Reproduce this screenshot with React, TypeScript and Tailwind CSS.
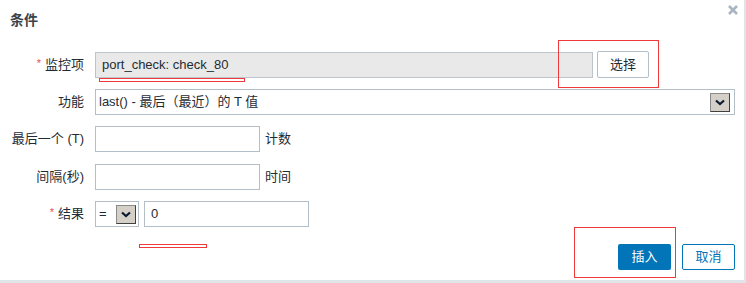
function Chevron() {
  return (
    <svg width="10" height="7" viewBox="0 0 10 7">
      <path d="M1 1.5 L5 5 L9 1.5" fill="none" stroke="#0b1a33" strokeWidth="2.2" />
    </svg>
  );
}

function ArrowBox() {
  return (
    <div className="w-[20px] h-[19px] bg-[#d4d0c8] border border-[#404040] border-t-[#8a8a8a] border-l-[#8a8a8a] flex items-center justify-center">
      <Chevron />
    </div>
  );
}

function Label({ text, required }: { text: string; required?: boolean }) {
  return (
    <div className="w-[84px] shrink-0 text-right text-[13px] text-[#1f2c33]">
      {required && <span className="text-[#e0525a] text-[11px] mr-[4px] align-top">*</span>}
      {text}
    </div>
  );
}

export default function App() {
  return (
    <div
      className="w-[746px] h-[283px] bg-[#dfe4e8] text-[#1f2c33]"
      style={{ fontFamily: '"Liberation Sans", "Noto Sans CJK SC", sans-serif' }}
    >
      <div className="relative w-[744px] h-[280px] bg-white">
        <div className="flex items-start justify-between">
          <h2 className="pl-[10px] pt-[11px] text-[14px] font-bold text-[#3a434a] leading-[18px]">条件</h2>
          <svg className="mt-[5px] mr-[6px]" width="10" height="10" viewBox="0 0 10 10">
            <path d="M1 1 L9 9 M9 1 L1 9" stroke="#a9b5c0" strokeWidth="2.6" />
          </svg>
        </div>

        <div className="mt-[22px] flex flex-col">
          <div className="flex items-center h-[27px] gap-[11px]">
            <Label text="监控项" required />
            <div className="w-[498px] h-[26px] bg-[#e9e9e9] border border-[#bcc5cb] flex items-center pl-[6px] text-[13px]">
              port_check: check_80
            </div>
            <button className="ml-[-7px] w-[52px] h-[27px] bg-white border border-[#b3bfc8] rounded-[2px] text-[13px] text-[#1f2c33]">
              选择
            </button>
          </div>

          <div className="mt-[11px] flex items-center h-[26px] gap-[11px]">
            <Label text="功能" />
            <div className="w-[640px] h-[26px] border border-[#b3bfc8] flex items-center justify-between pl-[3px] pr-[4px] text-[13px]">
              <span>last() - 最后（最近）的 T 值</span>
              <ArrowBox />
            </div>
          </div>

          <div className="mt-[11px] flex items-center h-[26px] gap-[11px]">
            <Label text="最后一个 (T)" />
            <div className="w-[165px] h-[26px] border border-[#b3bfc8]" />
            <span className="ml-[-6px] text-[13px]">计数</span>
          </div>

          <div className="mt-[12px] flex items-center h-[26px] gap-[11px]">
            <Label text="间隔(秒)" />
            <div className="w-[165px] h-[26px] border border-[#b3bfc8]" />
            <span className="ml-[-6px] text-[13px]">时间</span>
          </div>

          <div className="mt-[11px] flex items-center h-[26px] gap-[11px]">
            <Label text="结果" required />
            <div className="w-[44px] h-[26px] border border-[#b3bfc8] flex items-center justify-between pl-[3px] pr-[2px] text-[13px]">
              <span>=</span>
              <ArrowBox />
            </div>
            <div className="ml-[-6px] w-[165px] h-[26px] border border-[#b3bfc8] flex items-center pl-[6px] text-[13px]">
              0
            </div>
          </div>

          <div className="mt-[17px] mr-[9px] flex justify-end gap-[11px]">
            <button className="w-[53px] h-[26px] bg-[#0275b8] rounded-[2px] text-white text-[13px]">插入</button>
            <button className="w-[53px] h-[26px] bg-white border border-[#0275b8] rounded-[2px] text-[#0275b8] text-[13px]">
              取消
            </button>
          </div>
        </div>

        <div className="absolute left-[99px] top-[78px] w-[146px] h-[4px] border border-[#ee3a3a]" />
        <div className="absolute left-[558px] top-[40px] w-[101px] h-[48px] border border-[#ee3a3a]" />
        <div className="absolute left-[139px] top-[244px] w-[68px] h-[4px] border border-[#ee3a3a]" />
        <div className="absolute left-[574px] top-[227px] w-[102px] h-[51px] border border-[#ee3a3a]" />
      </div>
    </div>
  );
}
